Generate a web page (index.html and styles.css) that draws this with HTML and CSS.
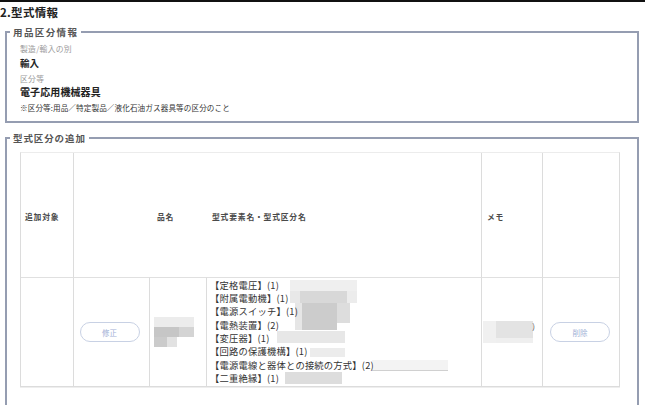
FILE: index.html
```html
<!DOCTYPE html>
<html lang="ja">
<head>
<meta charset="utf-8">
<title>型式情報</title>
<link rel="stylesheet" href="styles.css">
</head>
<body>
<div class="topline"></div>
<h2 class="title">2.型式情報</h2>

<fieldset class="group info">
  <legend>用品区分情報</legend>
  <div class="label first">製造/輸入の別</div>
  <div class="value">輸入</div>
  <div class="label second">区分等</div>
  <div class="value big">電子応用機械器具</div>
  <div class="note">※区分等:用品／特定製品／液化石油ガス器具等の区分のこと</div>
</fieldset>

<fieldset class="group add">
  <legend>型式区分の追加</legend>
  <div class="grid">
    <div class="cell head c1">追加対象</div>
    <div class="cell head c2 noline"></div>
    <div class="cell head c3 noline">品名</div>
    <div class="cell head c4">型式要素名・型式区分名</div>
    <div class="cell head c5">メモ</div>
    <div class="cell head c6 last"></div>

    <div class="cell body c1"></div>
    <div class="cell body c2 center"><button class="pill">修正</button></div>
    <div class="cell body c3 center">
      <svg class="blur-name" width="40" height="30" viewBox="0 0 40 30">
        <rect x="0" y="0" width="40" height="10" fill="#ececec"/>
        <rect x="0" y="10" width="25" height="10" fill="#c6c6c6"/>
        <rect x="25" y="10" width="15" height="10" fill="#d4d4d4"/>
        <rect x="0" y="20" width="13" height="10" fill="#cbcbcb"/>
        <rect x="13" y="20" width="10" height="10" fill="#e2e2e2"/>
      </svg>
    </div>
    <div class="cell body c4 types">
      <svg class="blur-overlay" width="275" height="108" viewBox="0 0 275 108">
        <rect x="83" y="2" width="67" height="11" fill="#efefef"/>
        <rect x="83" y="13" width="10" height="12" fill="#e8e8e8"/>
        <rect x="93" y="13" width="47" height="12" fill="#d8d8d8"/>
        <rect x="140" y="13" width="10" height="12" fill="#ececec"/>
        <rect x="88" y="25" width="7" height="27" fill="#e6e6e6"/>
        <rect x="95" y="25" width="35" height="27" fill="#cccccc"/>
        <rect x="130" y="25" width="13" height="20" fill="#dddddd"/>
        <rect x="70" y="53" width="68" height="12" fill="#e7e7e7"/>
        <rect x="103" y="70" width="35" height="9" fill="#ececec"/>
        <rect x="165" y="82" width="76" height="11" fill="#f3f3f3"/>
        <rect x="165" y="92" width="76" height="1" fill="#d0d0d0"/>
        <rect x="78" y="94" width="57" height="12" fill="#dddddd"/>
      </svg>
      <div class="type">【定格電圧】(1)</div>
      <div class="type">【附属電動機】(1)</div>
      <div class="type">【電源スイッチ】(1)</div>
      <div class="type">【電熱装置】(2)</div>
      <div class="type">【変圧器】(1)</div>
      <div class="type">【回路の保護機構】(1)</div>
      <div class="type">【電源電線と器体との接続の方式】(2)</div>
      <div class="type">【二重絶縁】(1)</div>
    </div>
    <div class="cell body c5 center">
      <span class="memo">
        <svg width="50" height="22" viewBox="0 0 50 22">
          <rect x="0" y="0" width="13" height="22" fill="#f0f0f0"/>
          <rect x="13" y="0" width="37" height="17" fill="#e3e3e3"/>
          <rect x="13" y="17" width="37" height="5" fill="#efefef"/>
        </svg><span class="paren">)</span>
      </span>
    </div>
    <div class="cell body c6 last center"><button class="pill">削除</button></div>
  </div>
</fieldset>
</body>
</html>
```

FILE: styles.css
```css
* { box-sizing: border-box; }

body {
  margin: 0;
  background: #ffffff;
  font-family: "Noto Sans CJK JP", "Noto Sans", sans-serif;
  color: #333;
  width: 645px;
  height: 405px;
  overflow: hidden;
}

.topline {
  height: 2px;
  background: #111;
}

.title {
  margin: 2px 0 0 0;
  height: 16px;
  line-height: 16px;
  font-size: 11.5px;
  font-weight: 700;
  color: #222;
  letter-spacing: 0.3px;
}

.group {
  margin: 0 6px 0 5px;
  border: 2px solid #959db1;
  padding: 0 0 0 13px;
  min-width: 0;
}

.group legend {
  margin-left: -10px;
  padding: 0 3px;
  height: 14px;
  line-height: 14px;
  font-size: 9.5px;
  font-weight: 700;
  color: #555;
  letter-spacing: 1.4px;
}

.info {
  margin-top: 5px;
  padding-top: 4px;
  padding-bottom: 7px;
}

.label {
  font-size: 7.8px;
  line-height: 12px;
  height: 12px;
  color: #9a9a9a;
  letter-spacing: 0.3px;
}

.label.second { margin-top: 3px; }

.value {
  margin-top: 1px;
  font-size: 9.5px;
  line-height: 14px;
  height: 14px;
  font-weight: 700;
  color: #222;
}

.value.big {
  margin-top: 0;
  font-size: 10px;
  letter-spacing: 0.1px;
}

.note {
  margin-top: 3px;
  font-size: 7.6px;
  line-height: 12px;
  height: 12px;
  color: #333;
  letter-spacing: 0.1px;
}

.add {
  margin-top: 8px;
  padding-top: 7px;
  height: 300px;
}

.add legend {
  letter-spacing: 0.9px;
}

.grid {
  width: 600px;
  display: grid;
  grid-template-columns: 53px 76px 57px 275px 61px 76px;
  grid-template-rows: 124px 109px;
  border: 1px solid #dcdcdc;
  border-top-color: #ececec;
  box-shadow: 0 1px 0 #eeeeee;
}

.cell {
  border-right: 1px solid #dcdcdc;
  display: flex;
  align-items: center;
  padding: 0 4px;
  min-width: 0;
}

.cell.noline { border-right: none; }
.cell.last { border-right: none; }

.cell.body {
  border-top: 1px solid #e0e0e0;
}

.cell.center { justify-content: center; }

.head {
  font-size: 7.8px;
  font-weight: 700;
  color: #4a4a4a;
  letter-spacing: 0.8px;
  padding-top: 2px;
}

.head.c3 { padding-left: 7px; }
.head.c4 { padding-left: 5px; }
.head.c5 { padding-left: 5px; }

.pill {
  width: 60px;
  height: 20px;
  border: 1px solid #c8d1e4;
  border-radius: 10px;
  background: #fff;
  color: #9fb1d6;
  font-family: "Noto Sans CJK JP", sans-serif;
  font-size: 7.5px;
  padding: 0;
  margin-left: -4px;
}

.c6 .pill { margin-left: -2px; }

.c3.center { padding: 0; justify-content: flex-start; padding-left: 4px; }

.types {
  position: relative;
  flex-direction: column;
  align-items: flex-start;
  justify-content: center;
  padding: 0 0 0 3px;
}

.type {
  position: relative;
  font-size: 9.3px;
  line-height: 13.3px;
  height: 13.3px;
  color: #333;
  white-space: nowrap;
  letter-spacing: 0.2px;
}

.blur-overlay {
  position: absolute;
  left: 0;
  top: 0;
}

.memo {
  display: flex;
  align-items: flex-start;
  margin-left: -6px;
}

.paren {
  font-size: 8px;
  line-height: 10px;
  color: #444;
  margin-left: -1px;
}
```
